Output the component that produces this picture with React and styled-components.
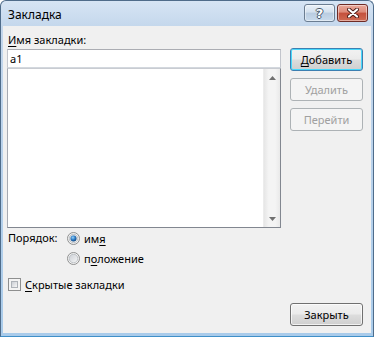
import React from "react";
import styled, { createGlobalStyle } from "styled-components";

const GlobalStyle = createGlobalStyle`
  html, body {
    margin: 0;
    padding: 0;
    background: #ffffff;
  }
  body {
    font-family: "Noto Sans", "DejaVu Sans", sans-serif;
    font-size: 11px;
    color: #000;
  }
  * {
    box-sizing: border-box;
  }
`;

const Window = styled.div`
  width: 374px;
  height: 337px;
  display: flex;
  flex-direction: column;
  border: 1px solid #4f6c8a;
  border-bottom-color: #3f8fc8;
  border-radius: 6px 6px 0 0;
  background: linear-gradient(#d6e4f4 0px, #c4d7ec 26px, #a9cbea 100%);
  padding: 0 2px 3px 2px;
  overflow: hidden;
`;

const TitleBar = styled.div`
  height: 25px;
  display: flex;
  align-items: flex-start;
  justify-content: space-between;
  padding-left: 5px;
`;

const TitleText = styled.div`
  margin-top: 5px;
  font-size: 12px;
  color: #000;
`;

const CaptionButtons = styled.div`
  display: flex;
  gap: 2px;
  margin-top: 3px;
  margin-right: 3px;
`;

const CaptionButton = styled.div`
  width: ${(p) => p.$w}px;
  height: 18px;
  border: 1px solid ${(p) => (p.$close ? "#6e2b25" : "#6b7d91")};
  border-radius: 3px;
  display: flex;
  align-items: center;
  justify-content: center;
  background: ${(p) =>
    p.$close
      ? "linear-gradient(#e9a99b 0%, #dd8a79 45%, #c4503c 50%, #cf6a52 100%)"
      : "linear-gradient(#eaf1f8 0%, #d4e1ee 45%, #b9cce0 50%, #c9dbec 100%)"};
  box-shadow: inset 0 0 0 1px rgba(255, 255, 255, 0.45);
`;

const HelpGlyph = styled.span`
  font-family: "DejaVu Sans", sans-serif;
  font-weight: bold;
  font-size: 13px;
  line-height: 1;
  color: #ffffff;
  text-shadow: -1px 0 #45566a, 1px 0 #45566a, 0 -1px #45566a, 0 1px #45566a;
`;

const Client = styled.div`
  flex: 1;
  background: #f0f0f0;
  display: flex;
  flex-direction: column;
  padding: 7px 8px 7px 4px;
`;

const Main = styled.div`
  display: flex;
  gap: 9px;
`;

const LeftColumn = styled.div`
  width: 274px;
  display: flex;
  flex-direction: column;
`;

const RightColumn = styled.div`
  width: 73px;
  display: flex;
  flex-direction: column;
  gap: 7px;
  padding-top: 15px;
`;

const Label = styled.div`
  height: 14px;
  line-height: 14px;
  padding-left: 1px;
  margin-bottom: 2px;
`;

const Key = styled.span`
  text-decoration: underline;
  text-underline-offset: 2px;
`;

const TextBox = styled.div`
  height: 19px;
  border: 1px solid #abadb3;
  border-left-color: #c2c5cc;
  border-right-color: #c2c5cc;
  border-bottom-color: #d3d8de;
  background: #ffffff;
  padding-left: 2px;
  line-height: 17px;
`;

const ListBox = styled.div`
  height: 160px;
  border: 1px solid #a6aab2;
  border-top-color: #c9ccd2;
  border-right-color: #828790;
  border-bottom-color: #828790;
  background: #ffffff;
  display: flex;
  justify-content: flex-end;
`;

const ScrollBar = styled.div`
  width: 17px;
  display: flex;
  flex-direction: column;
  justify-content: space-between;
  background: linear-gradient(90deg, #e6e6e6, #f4f4f4 30%, #f4f4f4 70%, #e9e9e9);
  border-left: 1px solid #ececec;
`;

const ArrowButton = styled.div`
  height: 17px;
  display: flex;
  align-items: center;
  justify-content: center;
`;

const OrderGroup = styled.div`
  display: flex;
  padding-left: 1px;
`;

const OrderLabel = styled.div`
  width: 59px;
  height: 20px;
  line-height: 20px;
`;

const RadioList = styled.div`
  display: flex;
  flex-direction: column;
`;

const OptionRow = styled.label`
  height: ${(p) => p.$h || 20}px;
  display: flex;
  align-items: center;
  gap: 4px;
`;

const CheckRow = styled(OptionRow)`
  margin-top: 8px;
  padding-left: 1px;
`;

const CheckBox = styled.div`
  width: 13px;
  height: 13px;
  border: 1px solid #8e8f8f;
  background: #f4f4f4;
  padding: 2px;
  & > div {
    width: 100%;
    height: 100%;
    border: 1px solid #aeb3b9;
    background: linear-gradient(135deg, #cbcfd5, #f7f7f7);
  }
`;

const Button = styled.div`
  height: 23px;
  width: 73px;
  border: 1px solid ${(p) => (p.$disabled ? "#adb2b5" : p.$default ? "#3c7fb1" : "#707070")};
  border-radius: 3px;
  display: flex;
  align-items: center;
  justify-content: center;
  color: ${(p) => (p.$disabled ? "#a0a0a0" : "#000")};
  background: ${(p) =>
    p.$disabled
      ? "#f4f4f4"
      : "linear-gradient(#f2f2f2 0%, #ebebeb 48%, #dddddd 52%, #cfcfcf 100%)"};
  box-shadow: ${(p) =>
    p.$default
      ? "inset 0 0 0 1px #48d8fb"
      : p.$disabled
      ? "none"
      : "inset 0 0 0 1px rgba(255,255,255,0.7)"};
`;

const Footer = styled.div`
  margin-top: auto;
  display: flex;
  justify-content: flex-end;
`;

function Radio({ checked }) {
  return (
    <svg width="13" height="13" viewBox="0 0 13 13">
      <defs>
        <linearGradient id={checked ? "rg1" : "rg0"} x1="0" y1="0" x2="1" y2="1">
          <stop offset="0" stopColor="#cbcfd5" />
          <stop offset="1" stopColor="#f7f7f7" />
        </linearGradient>
        <radialGradient id="dot" cx="0.4" cy="0.35" r="0.7">
          <stop offset="0" stopColor="#9bd3f7" />
          <stop offset="0.5" stopColor="#2f7fc8" />
          <stop offset="1" stopColor="#0d3f78" />
        </radialGradient>
      </defs>
      <circle cx="6.5" cy="6.5" r="6" fill="#f4f4f4" stroke="#8e8f8f" />
      <circle cx="6.5" cy="6.5" r="4.3" fill={`url(#${checked ? "rg1" : "rg0"})`} stroke="#b3b8bd" strokeWidth="0.8" />
      {checked && <circle cx="6.5" cy="6.5" r="3" fill="url(#dot)" />}
    </svg>
  );
}

function Arrow({ up }) {
  return (
    <svg width="7" height="4" viewBox="0 0 7 4">
      <path d={up ? "M3.5 0 L7 4 L0 4 Z" : "M0 0 L7 0 L3.5 4 Z"} fill="#707070" />
    </svg>
  );
}

export default function App() {
  return (
    <>
      <GlobalStyle />
      <Window>
        <TitleBar>
          <TitleText>Закладка</TitleText>
          <CaptionButtons>
            <CaptionButton $w={31}>
              <HelpGlyph>?</HelpGlyph>
            </CaptionButton>
            <CaptionButton $w={31} $close>
              <svg width="12" height="10" viewBox="0 0 12 10">
                <path d="M2 1.5 L10 8.5 M10 1.5 L2 8.5" stroke="#4a1b16" strokeWidth="4" strokeLinecap="round" />
                <path d="M2 1.5 L10 8.5 M10 1.5 L2 8.5" stroke="#ffffff" strokeWidth="2.2" strokeLinecap="round" />
              </svg>
            </CaptionButton>
          </CaptionButtons>
        </TitleBar>
        <Client>
          <Main>
            <LeftColumn>
              <Label>
                <Key>И</Key>мя закладки:
              </Label>
              <TextBox>a1</TextBox>
              <ListBox>
                <ScrollBar>
                  <ArrowButton>
                    <Arrow up />
                  </ArrowButton>
                  <ArrowButton>
                    <Arrow />
                  </ArrowButton>
                </ScrollBar>
              </ListBox>
              <OrderGroup>
                <OrderLabel>Порядок:</OrderLabel>
                <RadioList>
                  <OptionRow>
                    <Radio checked />
                    <span>
                      им<Key>я</Key>
                    </span>
                  </OptionRow>
                  <OptionRow>
                    <Radio />
                    <span>
                      п<Key>о</Key>ложение
                    </span>
                  </OptionRow>
                </RadioList>
              </OrderGroup>
              <CheckRow $h={16}>
                <CheckBox>
                  <div />
                </CheckBox>
                <span>
                  <Key>С</Key>крытые закладки
                </span>
              </CheckRow>
            </LeftColumn>
            <RightColumn>
              <Button $default>
                <span>
                  <Key>Д</Key>обавить
                </span>
              </Button>
              <Button $disabled>Удалить</Button>
              <Button $disabled>Перейти</Button>
            </RightColumn>
          </Main>
          <Footer>
            <Button>Закрыть</Button>
          </Footer>
        </Client>
      </Window>
    </>
  );
}
